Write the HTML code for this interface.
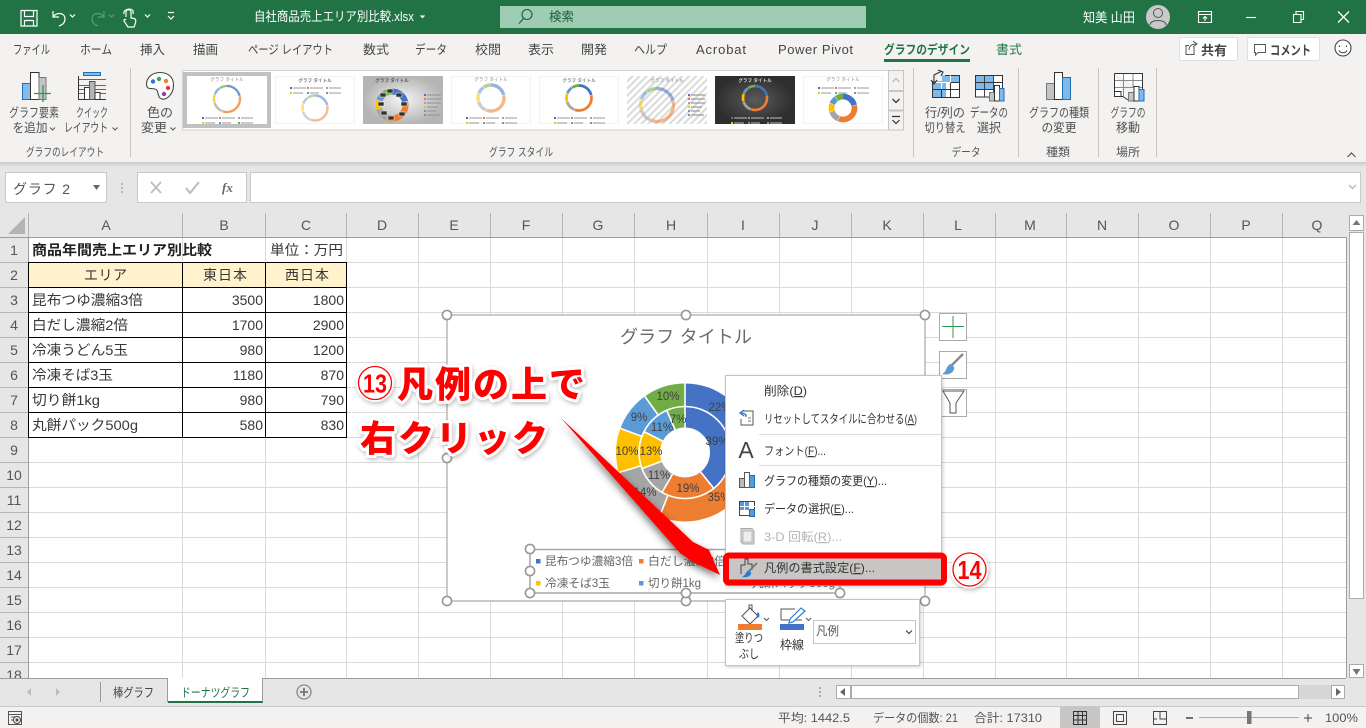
<!DOCTYPE html>
<html lang="ja"><head><meta charset="utf-8"><title>自社商品売上エリア別比較.xlsx</title>
<style>
html,body{margin:0;padding:0;width:1366px;height:728px;overflow:hidden;background:#fff}
svg{display:block}
text{font-family:"Liberation Sans","Noto Sans CJK JP",sans-serif;font-size:12px;fill:#444;white-space:pre}
.t{font-size:12.5px;fill:#444}
.c{font-size:14px;fill:#383838}
.h{font-size:14px;fill:#555}
.m{text-anchor:middle}
.e{text-anchor:end}
.r{font-size:12.5px;fill:#505050;text-anchor:middle}
.g{font-size:11.5px;fill:#555;text-anchor:middle}
.w{fill:#fff}
.p{font-size:11.5px;fill:#404040;text-anchor:middle}
.l{font-size:11.5px;fill:#666}
.n{font-size:12px;fill:#333}
.s{font-size:12px;fill:#555}
.a{font-size:36px;font-weight:900;fill:#f00;stroke:#fff;stroke-width:6px;paint-order:stroke;stroke-linejoin:round}
.tt{font-size:4.6px;font-weight:700;fill:#888;text-anchor:middle}
</style></head><body>
<svg width="1366" height="728" viewBox="0 0 1366 728" xmlns="http://www.w3.org/2000/svg">
<defs>
<g id="dn" fill="none" transform="rotate(-90)">
<circle r="10" pathLength="100" stroke="#4472c4" stroke-dasharray="21 79" stroke-dashoffset="0"/>
<circle r="10" pathLength="100" stroke="#ed7d31" stroke-dasharray="34 66" stroke-dashoffset="-21.5"/>
<circle r="10" pathLength="100" stroke="#a5a5a5" stroke-dasharray="14 86" stroke-dashoffset="-56"/>
<circle r="10" pathLength="100" stroke="#ffc000" stroke-dasharray="10 90" stroke-dashoffset="-70.5"/>
<circle r="10" pathLength="100" stroke="#5b9bd5" stroke-dasharray="9 91" stroke-dashoffset="-81"/>
<circle r="10" pathLength="100" stroke="#70ad47" stroke-dasharray="9.5 90.5" stroke-dashoffset="-90.5"/>
</g>
<g id="lg">
<rect x="0" y="0" width="2" height="2" fill="#4472c4"/><rect x="3" y=".4" width="13" height="1.2" fill="#aaa"/>
<rect x="17" y="0" width="2" height="2" fill="#ed7d31"/><rect x="20" y=".4" width="13" height="1.2" fill="#aaa"/>
<rect x="36" y="0" width="2" height="2" fill="#a5a5a5"/><rect x="39" y=".4" width="12" height="1.2" fill="#aaa"/>
<rect x="0" y="5" width="2" height="2" fill="#ffc000"/><rect x="3" y="5.4" width="10" height="1.2" fill="#aaa"/>
<rect x="17" y="5" width="2" height="2" fill="#5b9bd5"/><rect x="20" y="5.4" width="9" height="1.2" fill="#aaa"/>
<rect x="36" y="5" width="2" height="2" fill="#70ad47"/><rect x="39" y="5.4" width="12" height="1.2" fill="#aaa"/>
</g>
<g id="lv">
<rect x="0" y="0" width="2" height="2" fill="#4472c4"/><rect x="3" y=".4" width="14" height="1.2" fill="#999"/>
<rect x="0" y="4" width="2" height="2" fill="#ed7d31"/><rect x="3" y="4.4" width="14" height="1.2" fill="#999"/>
<rect x="0" y="8" width="2" height="2" fill="#a5a5a5"/><rect x="3" y="8.4" width="14" height="1.2" fill="#999"/>
<rect x="0" y="12" width="2" height="2" fill="#ffc000"/><rect x="3" y="12.4" width="11" height="1.2" fill="#999"/>
<rect x="0" y="16" width="2" height="2" fill="#5b9bd5"/><rect x="3" y="16.4" width="9" height="1.2" fill="#999"/>
<rect x="0" y="20" width="2" height="2" fill="#70ad47"/><rect x="3" y="20.4" width="13" height="1.2" fill="#999"/>
</g>
<pattern id="st" width="5" height="5" patternUnits="userSpaceOnUse" patternTransform="rotate(45)"><rect width="5" height="5" fill="#fff"/><rect width="2.2" height="5" fill="#dcdcdc"/></pattern>
<radialGradient id="gb"><stop offset="0" stop-color="#f4f4f4"/><stop offset="1" stop-color="#b5b5b5"/></radialGradient>
<radialGradient id="gd"><stop offset="0" stop-color="#5a5a5a"/><stop offset="1" stop-color="#2e2e2e"/></radialGradient>
<linearGradient id="sh" x1="0" y1="0" x2="0" y2="1"><stop offset="0" stop-color="#c9c9c9"/><stop offset="1" stop-color="#e6e6e6"/></linearGradient>
<filter id="ds" x="-20%" y="-20%" width="150%" height="150%"><feDropShadow dx="-1" dy="3" stdDeviation="4" flood-color="#000" flood-opacity=".55"/></filter>
<filter id="ts" x="-10%" y="-20%" width="120%" height="140%"><feDropShadow dx="1" dy="2" stdDeviation="2" flood-color="#000" flood-opacity=".25"/></filter>
<filter id="ms" x="-5%" y="-5%" width="110%" height="110%"><feDropShadow dx="1" dy="1" stdDeviation="1.5" flood-color="#000" flood-opacity=".2"/></filter>
</defs>

<!-- sheet -->
<rect x="0" y="162" width="1366" height="566" fill="#e6e6e6"/>
<rect x="29" y="238" width="1317" height="440" fill="#fff"/>
<path d="M182.5 238V678M265.5 238V678M346.5 238V678M418.5 238V678M490.5 238V678M562.5 238V678M634.5 238V678M707.5 238V678M779.5 238V678M851.5 238V678M923.5 238V678M995.5 238V678M1066.5 238V678M1138.5 238V678M1210.5 238V678M1282.5 238V678M29 262.5H1346M29 287.5H1346M29 312.5H1346M29 337.5H1346M29 362.5H1346M29 387.5H1346M29 412.5H1346M29 437.5H1346M29 462.5H1346M29 487.5H1346M29 512.5H1346M29 537.5H1346M29 562.5H1346M29 587.5H1346M29 612.5H1346M29 637.5H1346M29 662.5H1346" stroke="#dadada" fill="none"/>
<!-- headers -->
<rect x="0" y="213" width="1346" height="25" fill="#e6e6e6"/>
<rect x="0" y="213" width="28" height="466" fill="#e6e6e6"/>
<path d="M182.5 213V237M265.5 213V237M346.5 213V237M418.5 213V237M490.5 213V237M562.5 213V237M634.5 213V237M707.5 213V237M779.5 213V237M851.5 213V237M923.5 213V237M995.5 213V237M1066.5 213V237M1138.5 213V237M1210.5 213V237M1282.5 213V237M28.5 213V237" stroke="#b4b4b4" fill="none"/>
<path d="M0 262.5H28M0 287.5H28M0 312.5H28M0 337.5H28M0 362.5H28M0 387.5H28M0 412.5H28M0 437.5H28M0 462.5H28M0 487.5H28M0 512.5H28M0 537.5H28M0 562.5H28M0 587.5H28M0 612.5H28M0 637.5H28M0 662.5H28" stroke="#b4b4b4" fill="none"/>
<path d="M0 237.5H1346M28.5 237V678M1346.5 237V678M0 678.5H1346" stroke="#9c9c9c" fill="none"/>
<polygon points="8,234 25,234 25,217" fill="#b4b4b4"/>
<g class="h">
<text class="h m" x="106" y="230">A</text><text class="h m" x="224" y="230">B</text><text class="h m" x="306" y="230">C</text><text class="h m" x="382" y="230">D</text><text class="h m" x="454" y="230">E</text><text class="h m" x="526" y="230">F</text><text class="h m" x="598" y="230">G</text><text class="h m" x="671" y="230">H</text><text class="h m" x="743" y="230">I</text><text class="h m" x="815" y="230">J</text><text class="h m" x="887" y="230">K</text><text class="h m" x="958" y="230">L</text><text class="h m" x="1030" y="230">M</text><text class="h m" x="1102" y="230">N</text><text class="h m" x="1174" y="230">O</text><text class="h m" x="1246" y="230">P</text><text class="h m" x="1317" y="230">Q</text>
<text class="h m" x="14" y="255">1</text><text class="h m" x="14" y="280">2</text><text class="h m" x="14" y="305">3</text><text class="h m" x="14" y="330">4</text><text class="h m" x="14" y="355">5</text><text class="h m" x="14" y="380">6</text><text class="h m" x="14" y="405">7</text><text class="h m" x="14" y="430">8</text><text class="h m" x="14" y="455">9</text><text class="h m" x="14" y="480">10</text><text class="h m" x="14" y="505">11</text><text class="h m" x="14" y="530">12</text><text class="h m" x="14" y="555">13</text><text class="h m" x="14" y="580">14</text><text class="h m" x="14" y="605">15</text><text class="h m" x="14" y="630">16</text><text class="h m" x="14" y="655">17</text><text class="h m" x="14" y="680">18</text>
</g>
<!-- table -->
<rect x="29" y="263" width="317" height="24" fill="#fff2cc"/>
<path d="M28.5 262V438M182.5 262V438M265.5 262V438M346.5 262V438M28 262.5H347M28 287.5H347M28 312.5H347M28 337.5H347M28 362.5H347M28 387.5H347M28 412.5H347M28 437.5H347" stroke="#000" fill="none"/>
<text class="c" x="32" y="255" style="font-weight:700;fill:#222" textLength="180" lengthAdjust="spacingAndGlyphs">商品年間売上エリア別比較</text>
<text class="c" x="270" y="255" textLength="73" lengthAdjust="spacingAndGlyphs">単位：万円</text>
<text class="c" x="84" y="280" textLength="43" lengthAdjust="spacing">エリア</text>
<text class="c" x="203" y="280" textLength="44" lengthAdjust="spacing">東日本</text>
<text class="c" x="285" y="280" textLength="44" lengthAdjust="spacing">西日本</text>
<text class="c" x="32" y="305" textLength="111" lengthAdjust="spacingAndGlyphs">昆布つゆ濃縮3倍</text>
<text class="c" x="32" y="330" textLength="96" lengthAdjust="spacingAndGlyphs">白だし濃縮2倍</text>
<text class="c" x="32" y="355" textLength="96" lengthAdjust="spacingAndGlyphs">冷凍うどん5玉</text>
<text class="c" x="32" y="380" textLength="81" lengthAdjust="spacingAndGlyphs">冷凍そば3玉</text>
<text class="c" x="32" y="405" textLength="68" lengthAdjust="spacingAndGlyphs">切り餅1kg</text>
<text class="c" x="32" y="430" textLength="106" lengthAdjust="spacingAndGlyphs">丸餅パック500g</text>
<text class="c e" x="263" y="305">3500</text><text class="c e" x="344" y="305">1800</text>
<text class="c e" x="263" y="330">1700</text><text class="c e" x="344" y="330">2900</text>
<text class="c e" x="263" y="355">980</text><text class="c e" x="344" y="355">1200</text>
<text class="c e" x="263" y="380">1180</text><text class="c e" x="344" y="380">870</text>
<text class="c e" x="263" y="405">980</text><text class="c e" x="344" y="405">790</text>
<text class="c e" x="263" y="430">580</text><text class="c e" x="344" y="430">830</text>

<!-- chart -->
<rect x="447" y="315" width="478" height="286" fill="#fff" stroke="#a6a6a6" stroke-width="1.2"/>
<text x="620" y="343" style="font-size:18px;fill:#6a6a6a" textLength="132" lengthAdjust="spacing">グラフ タイトル</text>
<g fill="none" transform="translate(685 452.5) rotate(-90)">
<g stroke-width="22.5">
<circle r="57.75" pathLength="100" stroke="#4472c4" stroke-dasharray="21.45 78.55"/>
<circle r="57.75" pathLength="100" stroke="#ed7d31" stroke-dasharray="34.57 65.43" stroke-dashoffset="-21.45"/>
<circle r="57.75" pathLength="100" stroke="#a5a5a5" stroke-dasharray="14.3 85.7" stroke-dashoffset="-56.02"/>
<circle r="57.75" pathLength="100" stroke="#ffc000" stroke-dasharray="10.37 89.63" stroke-dashoffset="-70.32"/>
<circle r="57.75" pathLength="100" stroke="#5b9bd5" stroke-dasharray="9.42 90.58" stroke-dashoffset="-80.69"/>
<circle r="57.75" pathLength="100" stroke="#70ad47" stroke-dasharray="9.89 90.11" stroke-dashoffset="-90.11"/>
</g>
<g stroke-width="21">
<circle r="35.5" pathLength="100" stroke="#4472c4" stroke-dasharray="39.24 60.76"/>
<circle r="35.5" pathLength="100" stroke="#ed7d31" stroke-dasharray="19.06 80.94" stroke-dashoffset="-39.24"/>
<circle r="35.5" pathLength="100" stroke="#a5a5a5" stroke-dasharray="10.99 89.01" stroke-dashoffset="-58.3"/>
<circle r="35.5" pathLength="100" stroke="#ffc000" stroke-dasharray="13.23 86.77" stroke-dashoffset="-69.29"/>
<circle r="35.5" pathLength="100" stroke="#5b9bd5" stroke-dasharray="10.99 89.01" stroke-dashoffset="-82.52"/>
<circle r="35.5" pathLength="100" stroke="#70ad47" stroke-dasharray="6.49 93.51" stroke-dashoffset="-93.51"/>
</g>
<circle r="46" stroke="#fff" stroke-width="1.6"/>
</g>
<g stroke="#fff" stroke-width="1.6">
<g transform="translate(685 452.5)">
<path transform="rotate(0)" d="M0 -25V-69"/>
<path transform="rotate(141.26)" d="M0 -25V-46"/><path transform="rotate(209.87)" d="M0 -25V-46"/><path transform="rotate(249.4)" d="M0 -25V-46"/><path transform="rotate(297)" d="M0 -25V-46"/><path transform="rotate(336.6)" d="M0 -25V-46"/>
<path transform="rotate(77.2)" d="M0 -46V-69"/><path transform="rotate(201.7)" d="M0 -46V-69"/><path transform="rotate(253.2)" d="M0 -46V-69"/><path transform="rotate(290.5)" d="M0 -46V-69"/><path transform="rotate(324.4)" d="M0 -46V-69"/>
</g></g>
<text class="p" x="668" y="400">10%</text><text class="p" x="720" y="411">22%</text><text class="p" x="639" y="421">9%</text><text class="p" x="678" y="423">7%</text><text class="p" x="662" y="431">11%</text><text class="p" x="717" y="445">39%</text><text class="p" x="627" y="455">10%</text><text class="p" x="651" y="455">13%</text><text class="p" x="659" y="479">11%</text><text class="p" x="688" y="492">19%</text><text class="p" x="645" y="496">14%</text><text class="p" x="719" y="501">35%</text>
<!-- legend -->
<rect x="530" y="549.5" width="310" height="43.5" fill="none" stroke="#a6a6a6" stroke-width="1.5"/>
<rect x="536" y="559" width="4.5" height="4.5" fill="#4472c4"/><text class="l" x="545" y="565" textLength="88" lengthAdjust="spacingAndGlyphs">昆布つゆ濃縮3倍</text>
<rect x="639" y="559" width="4.5" height="4.5" fill="#ed7d31"/><text class="l" x="648" y="565" textLength="78" lengthAdjust="spacingAndGlyphs">白だし濃縮2倍</text>
<rect x="536" y="581" width="4.5" height="4.5" fill="#ffc000"/><text class="l" x="545" y="587" textLength="65" lengthAdjust="spacingAndGlyphs">冷凍そば3玉</text>
<rect x="639" y="581" width="4.5" height="4.5" fill="#5b9bd5"/><text class="l" x="648" y="587" textLength="53" lengthAdjust="spacingAndGlyphs">切り餅1kg</text>
<text class="l" x="752" y="587" textLength="83" lengthAdjust="spacingAndGlyphs">丸餅パック500g</text>
<g fill="#fff" stroke="#999" stroke-width="1.6">
<circle cx="447" cy="315" r="4.6"/><circle cx="686" cy="315" r="4.6"/><circle cx="925" cy="315" r="4.6"/><circle cx="447" cy="458" r="4.6"/><circle cx="447" cy="601" r="4.6"/><circle cx="686" cy="601" r="4.6"/><circle cx="925" cy="601" r="4.6"/>
<circle cx="530" cy="549" r="4.6"/><circle cx="530" cy="571" r="4.6"/><circle cx="530" cy="593" r="4.6"/><circle cx="686" cy="549" r="4.6"/><circle cx="686" cy="593" r="4.6"/><circle cx="840" cy="593" r="4.6"/>
</g>
<!-- side buttons -->
<g fill="#fff" stroke="#a9a9a9"><rect x="939.5" y="313.5" width="27" height="27"/><rect x="939.5" y="351.5" width="27" height="27"/><rect x="939.5" y="389.5" width="27" height="27"/></g>
<path d="M953 316V338M942 326.5H964" stroke="#2c9a4f" stroke-width="1"/>
<path d="M963 354L951 366" stroke="#8a8a8a" stroke-width="2.4"/><path d="M951 364C946 365 947 372 942 374C949 376 955 372 954 367Z" fill="#5b9bd5"/>
<path d="M943 391H964L956 403V413H950V403Z" fill="#fff" stroke="#555" stroke-width="1"/>

<!-- arrow -->
<polygon filter="url(#ds)" points="561,418 693,542 709,550 720,575 693,562 680,553" fill="#f00"/>
<!-- menu -->
<rect x="725.500" y="375.500" width="216" height="210" fill="#fff" stroke="#c4c4c4" filter="url(#ms)"/>
<path d="M759 434.500H941M759 465.500H941" stroke="#dcdcdc"/>
<text class="n" x="764" y="395" textLength="43" lengthAdjust="spacingAndGlyphs">削除(<tspan style="text-decoration:underline">D</tspan>)</text>
<text class="n" x="764" y="423" textLength="153" lengthAdjust="spacingAndGlyphs">リセットしてスタイルに合わせる(<tspan style="text-decoration:underline">A</tspan>)</text>
<text class="n" x="764" y="455" textLength="62" lengthAdjust="spacingAndGlyphs">フォント(<tspan style="text-decoration:underline">F</tspan>)...</text>
<text class="n" x="764" y="485" textLength="123" lengthAdjust="spacingAndGlyphs">グラフの種類の変更(<tspan style="text-decoration:underline">Y</tspan>)...</text>
<text class="n" x="764" y="513" textLength="90" lengthAdjust="spacingAndGlyphs">データの選択(<tspan style="text-decoration:underline">E</tspan>)...</text>
<text class="n" x="764" y="541" textLength="78" lengthAdjust="spacingAndGlyphs" style="fill:#b5b5b5">3-D 回転(<tspan style="text-decoration:underline">R</tspan>)...</text>
<!-- menu icons -->
<path d="M742 411H753V425H741V419" fill="#fff" stroke="#555"/><path d="M745 415h2M748 418h3M748 421h3" stroke="#777"/><path d="M744 410l-4 3 4 3M741 413c3 0 5 1 5 4" fill="none" stroke="#2b7cd3" stroke-width="1.3"/>
<text x="746" y="458" class="m" style="font-size:23px;fill:#444">A</text>
<rect x="739.500" y="478.500" width="5" height="9" fill="#bbb" stroke="#555"/><rect x="744.500" y="472.500" width="5" height="15" fill="#fff" stroke="#555"/><rect x="749.500" y="475.500" width="5" height="12" fill="#5b9bd5" stroke="#1f6fb5"/>
<rect x="739.500" y="501.500" width="15" height="14" fill="#fff" stroke="#444"/><rect x="740" y="502" width="9" height="8" fill="#5b9bd5"/><path d="M744.500 502V515M740 506.500H755M740 510.500H749" stroke="#fff"/><rect x="749.500" y="509.500" width="5" height="7" fill="#5b9bd5" stroke="#1f6fb5"/>
<path d="M741 528.500H752L754 531V544H743L741 542Z" fill="#d4d4d4" stroke="#aaa"/><rect x="743" y="531" width="9" height="11" fill="#eee" stroke="#bbb"/>
<!-- highlight -->
<rect x="726" y="555" width="216" height="27" fill="#c8c6c4"/>
<text class="n" x="764" y="572" textLength="111" lengthAdjust="spacingAndGlyphs">凡例の書式設定(<tspan style="text-decoration:underline">F</tspan>)...</text>
<path d="M741 574V565H745V559H748V564H752V570" fill="none" stroke="#444"/><path d="M757 563L749 571" stroke="#777" stroke-width="1.8"/><path d="M749 570C746 571 746 575 742 577C747 578 752 576 751 572Z" fill="#2b7cd3"/>
<rect x="726" y="555.500" width="218" height="27" rx="3" fill="none" stroke="#f00" stroke-width="6"/>
<!-- 14 -->
<circle cx="969.500" cy="569.500" r="19" fill="#fff" filter="url(#ts)"/>
<circle cx="969.500" cy="569.500" r="16.500" fill="#fff" stroke="#f00" stroke-width="1.3"/>
<text x="969.500" y="579" class="m" style="font-size:26px;font-weight:700;fill:#f00" textLength="24" lengthAdjust="spacingAndGlyphs">14</text>
<!-- mini toolbar -->
<rect x="725.500" y="599.500" width="194" height="66" fill="#fff" stroke="#c4c4c4" filter="url(#ms)"/>
<path d="M742 616L750 608L758 616L750 624Z" fill="#fff" stroke="#555"/><path d="M749 609V605H752V611" fill="none" stroke="#555"/><path d="M758 612c2 2 2 5 0 6c-2-1-2-4 0-6Z" fill="#2b7cd3"/>
<path d="M764 618l2.500 2.500 2.500-2.500" fill="none" stroke="#555"/>
<rect x="738" y="624" width="24" height="6" fill="#ed7d31"/>
<text class="n m" x="749" y="642" textLength="28" lengthAdjust="spacingAndGlyphs">塗りつ</text>
<text class="n m" x="749" y="658" textLength="20" lengthAdjust="spacingAndGlyphs">ぶし</text>
<path d="M781 620V609H795M781 620H802" fill="none" stroke="#555"/>
<path d="M801 608L805 611L793 622L789 623L790 619Z" fill="#fff" stroke="#2b7cd3" stroke-width="1.2"/>
<path d="M806 618l2.500 2.500 2.500-2.500" fill="none" stroke="#555"/>
<rect x="780" y="624" width="24" height="6" fill="#4472c4"/>
<text class="n m" x="792" y="649" textLength="24" lengthAdjust="spacingAndGlyphs">枠線</text>
<rect x="813.500" y="620.500" width="102" height="23" fill="#fff" stroke="#c4c4c4"/>
<text class="n" x="816" y="635" textLength="23" lengthAdjust="spacingAndGlyphs" style="fill:#555">凡例</text>
<path d="M906 630.500l3 3 3-3" fill="none" stroke="#444" stroke-width="1.2"/>

<!-- annotation text -->
<g filter="url(#ts)">
<circle cx="375" cy="383" r="19" fill="#fff"/>
<circle cx="375" cy="383" r="16.500" fill="#fff" stroke="#f00" stroke-width="1.300"/>
<text x="375" y="392.500" class="m" style="font-size:26px;font-weight:700;fill:#f00" textLength="24" lengthAdjust="spacingAndGlyphs">13</text>
<text class="a" x="397" y="397" textLength="188" lengthAdjust="spacing">凡例の上で</text>
<text class="a" x="360" y="451" textLength="188" lengthAdjust="spacing">右クリック</text>
</g>

<!-- scrollbars -->
<rect x="1347" y="213" width="19" height="466" fill="#e6e6e6"/>
<rect x="1349.500" y="215.500" width="14" height="15" fill="#fff" stroke="#ababab"/><polygon points="1356.500,220 1352.500,225 1360.500,225" fill="#777"/>
<rect x="1349.500" y="232.500" width="14" height="366" fill="#fff" stroke="#ababab"/>
<rect x="1349.500" y="664.500" width="14" height="13" fill="#fff" stroke="#ababab"/><polygon points="1356.500,675 1352.500,669 1360.500,669" fill="#777"/>

<!-- sheet tabs -->
<rect x="0" y="679" width="1366" height="28" fill="#e6e6e6"/>
<path d="M0 678.500H168M262 678.500H1346" stroke="#9c9c9c"/>
<path d="M0 706.500H1366" stroke="#c9c9c9"/>
<path d="M31 688l-4 4 4 4ZM56 688l4 4-4 4Z" fill="#bdbdbd"/>
<path d="M100.500 682V702" stroke="#999"/>
<text x="113" y="697" textLength="41" lengthAdjust="spacingAndGlyphs" style="font-size:12.500px;fill:#444">棒グラフ</text>
<path d="M168 678H262V701H168Z" fill="#fff"/>
<rect x="168" y="701" width="95" height="2" fill="#217346"/>
<path d="M167.500 678V702M262.500 678V702" stroke="#9c9c9c"/>
<text x="181" y="697" textLength="69" lengthAdjust="spacingAndGlyphs" style="font-size:12.500px;fill:#217346">ドーナツグラフ</text>
<circle cx="304" cy="692" r="7" fill="none" stroke="#8a8a8a" stroke-width="1.300"/><path d="M300 692H308M304 688V696" stroke="#777" stroke-width="1.800"/>
<path d="M820 687v2M820 691v2M820 695v2" stroke="#aaa" stroke-width="2"/>
<rect x="836" y="685" width="508" height="14" fill="#d6d6d6"/>
<rect x="836.500" y="685.500" width="14" height="13" fill="#fff" stroke="#ababab"/><polygon points="840,692 845,688 845,696" fill="#666"/>
<rect x="851.500" y="685.500" width="447" height="13" fill="#fff" stroke="#ababab"/>
<rect x="1331.500" y="685.500" width="13" height="13" fill="#fff" stroke="#ababab"/><polygon points="1341,692 1336,688 1336,696" fill="#666"/>

<!-- status bar -->
<rect x="0" y="707" width="1366" height="21" fill="#f3f2f1"/>
<rect x="8.500" y="711.500" width="13" height="13" fill="none" stroke="#555"/><path d="M9 714.500H21M11 717h4M11 720h4" stroke="#555"/><circle cx="17" cy="720" r="3.500" fill="#f3f2f1" stroke="#444"/><circle cx="17" cy="720" r="1.500" fill="#444"/>
<text class="s" x="778" y="722" textLength="72" lengthAdjust="spacingAndGlyphs">平均: 1442.5</text>
<text class="s" x="873" y="722" textLength="85" lengthAdjust="spacingAndGlyphs">データの個数: 21</text>
<text class="s" x="974" y="722" textLength="68" lengthAdjust="spacingAndGlyphs">合計: 17310</text>
<rect x="1060" y="707" width="40" height="21" fill="#c8c6c4"/>
<path d="M1073.500 711.500H1086.500V724.500H1073.500ZM1073.500 715.500H1086.500M1073.500 720H1086.500M1078 711.500V724.500M1082.500 711.500V724.500" fill="none" stroke="#333"/>
<rect x="1113.500" y="711.500" width="13" height="13" fill="none" stroke="#444"/><rect x="1116.500" y="714.500" width="7" height="7" fill="none" stroke="#444"/>
<path d="M1153.500 711.500H1166.500V724.500H1153.500ZM1160 711.500V719H1166.500M1153.500 719H1157" fill="none" stroke="#444"/>
<path d="M1186 718H1193" stroke="#444" stroke-width="1.500"/><path d="M1199 717.500H1299" stroke="#aaa"/><rect x="1247" y="711" width="4.500" height="13" fill="#777"/><path d="M1304 718H1312M1308 714V722" stroke="#444"/>
<text class="s" x="1325" y="722" textLength="33" lengthAdjust="spacingAndGlyphs">100%</text>

<!-- ribbon bg -->
<rect x="0" y="34" width="1366" height="128" fill="#f3f2f1"/>
<rect x="0" y="162" width="1366" height="5" fill="url(#sh)"/>
<!-- formula bar -->
<rect x="5.500" y="172.500" width="101" height="30" fill="#fff" stroke="#c9c9c9"/>
<text x="13" y="194" textLength="57" lengthAdjust="spacing" style="font-size:14px;fill:#555">グラフ 2</text>
<polygon points="93,185 100,185 96.500,190" fill="#666"/>
<path d="M122 183v2M122 187v2M122 191v2" stroke="#aaa" stroke-width="1.500"/>
<rect x="137.500" y="172.500" width="109" height="30" fill="#fff" stroke="#c9c9c9"/>
<path d="M151 182L161 193M161 182L151 193" stroke="#bdbdbd" stroke-width="1.800"/>
<path d="M186 188L190 193L199 182" fill="none" stroke="#bdbdbd" stroke-width="2"/>
<text x="222" y="192" style="font-family:'Liberation Serif',serif;font-size:13px;font-style:italic;font-weight:700;fill:#666">fx</text>
<rect x="250.500" y="172.500" width="1110" height="30" fill="#fff" stroke="#c9c9c9"/>
<path d="M1349 185l3.500 3.500 3.500-3.500" fill="none" stroke="#bbb" stroke-width="1.500"/>

<!-- title bar -->
<rect x="0" y="0" width="1366" height="34" fill="#217346"/>
<g fill="none" stroke="#fff" stroke-width="1.200">
<path d="M21 10.500H37V26H21ZM24.500 10.500V16.500H33.500V10.500M24.500 26V20.500H33.500V26"/>
<path d="M53 11V17H59M53 17C56 12 65 12 65 19C65 23 62 25 59 26"/>
<path d="M70 14.500l2.500 2.500 2.500-2.500"/>
<g stroke="#5a9a78"><path d="M104 11V17H98M104 17C101 12 92 12 92 19C92 23 95 25 98 26"/><path d="M109 14.500l2.500 2.500 2.500-2.500"/></g>
<path d="M126 17V12C126 9 131 9 131 12V18L134 18.500C136 19 136 21 135.500 23L134 27H128L124 21C124 19 125 19 126 20"/><path d="M124 14C122 9 135 6 133 14"/>
<path d="M145 14.500l2.500 2.500 2.500-2.500"/>
<path d="M168 12.500H174M168 16l3 3 3-3"/>
<path d="M420.500 15.500l2 2 2-2" fill="#fff"/>
</g>
<text class="w" x="254" y="21" textLength="160" lengthAdjust="spacingAndGlyphs" style="font-size:13px">自社商品売上エリア別比較.xlsx</text>
<rect x="500" y="6" width="366" height="22" fill="#9fcdb3"/>
<circle cx="527" cy="14.500" r="5" fill="none" stroke="#1d5e3b" stroke-width="1.100"/><path d="M523.500 18.500L519 23.500" stroke="#1d5e3b" stroke-width="1.200"/>
<text x="549" y="21" style="font-size:12.500px;fill:#1d5e3b">検索</text>
<text class="w" x="1083" y="22" textLength="52" lengthAdjust="spacingAndGlyphs" style="font-size:13px">知美 山田</text>
<circle cx="1158" cy="17" r="12" fill="#c9c9c9"/><circle cx="1158" cy="13" r="4.500" fill="none" stroke="#555"/><path d="M1150 25C1150 19 1166 19 1166 25" fill="none" stroke="#555"/>
<g fill="none" stroke="#fff" stroke-width="1.100"><path d="M1198.500 11.500H1211.500V22.500H1198.500ZM1198.500 14.500H1211.500M1205 21V16.500M1203 18.500l2-2 2 2"/><path d="M1246 17.500H1256"/><path d="M1293.500 14.500H1301V22.500H1293.500ZM1296 14.500V11.500H1303.500V19.500H1301"/><path d="M1338 11.500L1349 22.500M1349 11.500L1338 22.500" stroke-width="1.300"/></g>

<!-- tabs -->
<g class="t">
<text class="t" x="13" y="54" textLength="37" lengthAdjust="spacingAndGlyphs">ファイル</text>
<text class="t" x="80" y="54" textLength="32" lengthAdjust="spacingAndGlyphs">ホーム</text>
<text class="t" x="140" y="54" textLength="25" lengthAdjust="spacingAndGlyphs">挿入</text>
<text class="t" x="193" y="54" textLength="25" lengthAdjust="spacingAndGlyphs">描画</text>
<text class="t" x="248" y="54" textLength="85" lengthAdjust="spacingAndGlyphs">ページ レイアウト</text>
<text class="t" x="363" y="54" textLength="26" lengthAdjust="spacingAndGlyphs">数式</text>
<text class="t" x="415" y="54" textLength="32" lengthAdjust="spacingAndGlyphs">データ</text>
<text class="t" x="475" y="54" textLength="26" lengthAdjust="spacingAndGlyphs">校閲</text>
<text class="t" x="528" y="54" textLength="26" lengthAdjust="spacingAndGlyphs">表示</text>
<text class="t" x="581" y="54" textLength="26" lengthAdjust="spacingAndGlyphs">開発</text>
<text class="t" x="634" y="54" textLength="33" lengthAdjust="spacingAndGlyphs">ヘルプ</text>
<text class="t" x="696" y="54" textLength="50" lengthAdjust="spacing" style="font-size:13px">Acrobat</text>
<text class="t" x="778" y="54" textLength="75" lengthAdjust="spacing" style="font-size:13px">Power Pivot</text>
<text class="t" x="884" y="54" textLength="86" lengthAdjust="spacingAndGlyphs" style="fill:#217346;font-weight:700">グラフのデザイン</text>
<text class="t" x="996" y="54" textLength="26" lengthAdjust="spacingAndGlyphs" style="fill:#217346">書式</text>
</g>
<rect x="884" y="59" width="86" height="3" fill="#217346"/>
<rect x="1179.500" y="37.500" width="58" height="23" rx="1.500" fill="#fff" stroke="#e1dfdd"/>
<path d="M1194 47V54.500H1186V45.500H1189M1189 50C1189 46 1192 44 1196 44M1193 41L1197 44L1193 47" fill="none" stroke="#555"/>
<text x="1201" y="55" textLength="26" lengthAdjust="spacingAndGlyphs" style="font-size:13px;font-weight:700;fill:#444">共有</text>
<rect x="1247.500" y="37.500" width="72" height="23" rx="1.500" fill="#fff" stroke="#e1dfdd"/>
<path d="M1254.500 44.500H1265.500V52.500H1258L1255.500 55V52.500H1254.500Z" fill="none" stroke="#555"/>
<text x="1270" y="55" textLength="41" lengthAdjust="spacingAndGlyphs" style="font-size:13px;font-weight:700;fill:#444">コメント</text>
<circle cx="1343" cy="48" r="8" fill="#fff" stroke="#444" stroke-width="1.100"/><path d="M1339.500 45.500v1.500M1346.500 45.500v1.500" stroke="#444" stroke-width="1.200"/><path d="M1339 50.500C1340.500 53.500 1345.500 53.500 1347 50.500" fill="none" stroke="#444"/>

<!-- ribbon separators -->
<path d="M130.500 68V157M913.500 68V157M1018.500 68V157M1098.500 68V157M1156.500 68V157" stroke="#c8c6c4"/>
<!-- icons: chart element -->
<rect x="22.500" y="83.500" width="8" height="16" fill="#85bbef" stroke="#1f6fb5"/>
<rect x="30.500" y="72.500" width="8.500" height="27" fill="#fff" stroke="#333"/>
<rect x="39" y="77.500" width="7" height="22" fill="#c4c4c4" stroke="#777"/>
<path d="M43 85V102M34 93.500H51" stroke="#2c9a4f" stroke-width="1.300"/>
<!-- quick layout -->
<rect x="83.500" y="72.500" width="17" height="3" fill="#85bbef" stroke="#1f6fb5"/>
<path d="M79 79.500H106M79 85.500H106M79 89.500H106M79 93.500H106" stroke="#2e75b6"/>
<path d="M78.500 76V99.500H106" fill="none" stroke="#333"/>
<rect x="84.500" y="87.500" width="5" height="12" fill="#fff" stroke="#333"/><rect x="89.500" y="81.500" width="5.500" height="18" fill="#b5b5b5" stroke="#555"/><rect x="95" y="92.500" width="5" height="7" fill="#fff" stroke="#333"/>
<!-- palette -->
<path d="M160 72.500C151 72.500 146.500 79 146.500 84C146.500 90 151 88 155 89C159 90 157 95 160 98C165 102 173.500 95 173.500 85C173.500 77 168 72.500 160 72.500Z" fill="#fff" stroke="#444" stroke-width="1.100"/>
<circle cx="153" cy="81.500" r="2.200" fill="#2e75d6"/><circle cx="159" cy="79" r="2.200" fill="#3aa655"/><circle cx="166" cy="81" r="2.200" fill="#ed7d31"/><circle cx="168" cy="88" r="2.200" fill="#e03c3c"/><circle cx="164" cy="94" r="2.200" fill="#8e3fb0"/>
<!-- ribbon labels left -->
<text class="r" x="34" y="117" textLength="50" lengthAdjust="spacingAndGlyphs">グラフ要素</text>
<text class="r" x="30" y="132" textLength="35" lengthAdjust="spacingAndGlyphs">を追加</text>
<path d="M50 127.500l2.500 2.500 2.500-2.500" fill="none" stroke="#555"/>
<text class="r" x="92" y="117" textLength="32" lengthAdjust="spacingAndGlyphs">クイック</text>
<text class="r" x="86" y="132" textLength="44" lengthAdjust="spacingAndGlyphs">レイアウト</text>
<path d="M112.500 127.500l2.500 2.500 2.500-2.500" fill="none" stroke="#555"/>
<text class="r" x="160" y="117" textLength="26" lengthAdjust="spacingAndGlyphs">色の</text>
<text class="r" x="154" y="132" textLength="26" lengthAdjust="spacingAndGlyphs">変更</text>
<path d="M170.500 127.500l2.500 2.500 2.500-2.500" fill="none" stroke="#555"/>
<text class="g" x="65" y="156" textLength="78" lengthAdjust="spacingAndGlyphs">グラフのレイアウト</text>
<text class="g" x="521" y="156" textLength="64" lengthAdjust="spacingAndGlyphs">グラフ スタイル</text>
<text class="g" x="966" y="156" textLength="29" lengthAdjust="spacingAndGlyphs">データ</text>
<text class="g" x="1058" y="156" textLength="24" lengthAdjust="spacingAndGlyphs">種類</text>
<text class="g" x="1128" y="156" textLength="24" lengthAdjust="spacingAndGlyphs">場所</text>
<text class="r" x="945" y="117" textLength="40" lengthAdjust="spacingAndGlyphs">行/列の</text>
<text class="r" x="945" y="132" textLength="41" lengthAdjust="spacingAndGlyphs">切り替え</text>
<text class="r" x="989" y="117" textLength="38" lengthAdjust="spacingAndGlyphs">データの</text>
<text class="r" x="989" y="132" textLength="24" lengthAdjust="spacingAndGlyphs">選択</text>
<text class="r" x="1059" y="117" textLength="60" lengthAdjust="spacingAndGlyphs">グラフの種類</text>
<text class="r" x="1059" y="132" textLength="35" lengthAdjust="spacingAndGlyphs">の変更</text>
<text class="r" x="1128" y="117" textLength="35" lengthAdjust="spacingAndGlyphs">グラフの</text>
<text class="r" x="1128" y="132" textLength="24" lengthAdjust="spacingAndGlyphs">移動</text>
<!-- switch row/col -->
<rect x="932.500" y="75.500" width="27" height="21.500" fill="#fff"/>
<path d="M933 75.500H959V82.500H946V89.500H933Z" fill="#7fb8ea"/><path d="M933 82V97H946V82Z" fill="#7fb8ea"/>
<path d="M932.500 75.500V97.500H959.500V75.500H945M932.500 82.500H959.500M932.500 89.500H959.500M941.500 82V97.500M950.500 75.500V97.500" fill="none" stroke="#333"/>
<path d="M950.500 75.500V82.500M941.500 83V89M932.500 82.500H950" stroke="#fff"/>
<rect x="929" y="70" width="13" height="11" fill="#f3f2f1"/>
<path d="M934 83V75L941 71.500M938 70L943 72L941 76M931 80L934 84L937 80" fill="none" stroke="#333" stroke-width="1.100"/>
<!-- select data -->
<rect x="975.500" y="75.500" width="27" height="21.500" fill="#fff" stroke="#333"/>
<rect x="976" y="76" width="17" height="13" fill="#7fb8ea"/>
<path d="M984.500 75.500V97M993.500 75.500V97M976 82.500H1003M976 89.500H993" stroke="#333" stroke-width=".9"/>
<rect x="989.500" y="92.500" width="5" height="8.500" fill="#c4c4c4" stroke="#777"/><rect x="994.500" y="85.500" width="5" height="15.500" fill="#fff" stroke="#333"/><rect x="999.500" y="88.500" width="4.500" height="12.500" fill="#7fb8ea" stroke="#1f6fb5"/>
<!-- chart type -->
<rect x="1046.500" y="83.500" width="8" height="16" fill="#c4c4c4" stroke="#777"/><rect x="1054.500" y="72.500" width="8" height="27" fill="#fff" stroke="#333"/><rect x="1062.500" y="77.500" width="8" height="22" fill="#7fb8ea" stroke="#1f6fb5"/>
<!-- move chart -->
<path d="M1114.500 73.500H1142.500V90M1114.500 73.500V96.500H1123L1128 100" fill="#fff" stroke="#333"/>
<path d="M1115 80.500H1142M1115 87.500H1142M1123.500 74V96M1133 74V88" stroke="#8a8a8a"/>
<path d="M1114.500 91.500H1121V96.500" fill="none" stroke="#333"/>
<rect x="1128.500" y="92.500" width="5.500" height="8.500" fill="#c4c4c4" stroke="#777"/><rect x="1134" y="86.500" width="5" height="14.500" fill="#fff" stroke="#333"/><rect x="1139" y="89.500" width="5" height="11.500" fill="#7fb8ea" stroke="#1f6fb5"/>
<path d="M1347.500 157l4-4 4 4" fill="none" stroke="#555" stroke-width="1.200"/>

<!-- gallery -->
<rect x="182.500" y="70.500" width="720" height="59.500" fill="#fff" stroke="#d2d0ce"/>
<rect x="183" y="72" width="88" height="56" fill="#c1c1c1"/><rect x="187" y="76" width="80" height="48" fill="#fff"/>
<rect x="275.500" y="76.500" width="79" height="47" fill="#fff" stroke="#f2f2f2"/>
<rect x="363" y="76" width="80" height="48" fill="url(#gb)"/>
<rect x="451.500" y="76.500" width="79" height="47" fill="#fff" stroke="#f2f2f2"/>
<rect x="539.500" y="76.500" width="79" height="47" fill="#fff" stroke="#f2f2f2"/>
<rect x="627" y="76" width="80" height="48" fill="url(#st)"/>
<rect x="715" y="76" width="80" height="48" fill="url(#gd)"/>
<rect x="803.500" y="76.500" width="79" height="47" fill="#fff" stroke="#f2f2f2"/>
<use href="#dn" transform="translate(227 99) scale(1.300)" style="stroke-width:1.800px" opacity=".75"/>
<use href="#dn" transform="translate(315 108) scale(1.250)" style="stroke-width:2px" opacity=".5"/>
<use href="#dn" transform="translate(392 105) scale(1.350)" style="stroke-width:4.500px"/>
<use href="#dn" transform="translate(491 98) scale(1.300)" style="stroke-width:2.600px" opacity=".55"/>
<use href="#dn" transform="translate(579 98) scale(1.250)" style="stroke-width:2.200px"/>
<use href="#dn" transform="translate(657 105) scale(1.650)" style="stroke-width:2px" opacity=".55"/>
<use href="#dn" transform="translate(755 98) scale(1.200)" style="stroke-width:2.200px"/>
<use href="#dn" transform="translate(843 108) scale(1.150)" style="stroke-width:5px"/>
<g fill="#333" stroke="#fff" stroke-width=".5"><rect x="387" y="89" width="6" height="4"/><rect x="396" y="93" width="6" height="4"/><rect x="380" y="93" width="6" height="4"/><rect x="401" y="102" width="6" height="4"/><rect x="378" y="102" width="6" height="4"/><rect x="399" y="112" width="6" height="4"/><rect x="388" y="116" width="6" height="4"/><rect x="381" y="111" width="6" height="4"/></g>
<use href="#lg" transform="translate(202 117)"/><use href="#lg" transform="translate(290 87)"/><use href="#lg" transform="translate(466 117)"/><use href="#lg" transform="translate(554 117)"/><use href="#lg" transform="translate(731 117)"/><use href="#lg" transform="translate(818 87)"/>
<use href="#lv" transform="translate(424 94)"/><use href="#lv" transform="translate(688 94)"/>
<text class="tt" x="227" y="81" style="font-weight:400">グラフ タイトル</text>
<text class="tt" x="315" y="82" style="fill:#777">グラフ タイトル</text>
<text class="tt" x="392" y="82" style="fill:#555">グラフ タイトル</text>
<text class="tt" x="491" y="81" style="font-weight:400">グラフ タイトル</text>
<text class="tt" x="579" y="82">グラフ タイトル</text>
<text class="tt" x="667" y="82" style="fill:#aaa">グラフ タイトル</text>
<text class="tt" x="755" y="82" style="fill:#ddd">グラフ タイトル</text>
<text class="tt" x="843" y="81" style="font-weight:400">グラフ タイトル</text>
<g fill="#f3f2f1" stroke="#c8c6c4"><rect x="888.500" y="70.500" width="15" height="20"/><rect x="888.500" y="91.500" width="15" height="18.500"/><rect x="888.500" y="111" width="15" height="19"/></g>
<path d="M892.500 82l3.500-3.500 3.500 3.500" fill="none" stroke="#bbb" stroke-width="1.300"/>
<path d="M892.500 99l3.500 3.500 3.500-3.500" fill="none" stroke="#333" stroke-width="1.300"/>
<path d="M892 116.500H900M892.500 120l3.500 3.500 3.500-3.500" fill="none" stroke="#333" stroke-width="1.200"/>
</svg>
</body></html>
